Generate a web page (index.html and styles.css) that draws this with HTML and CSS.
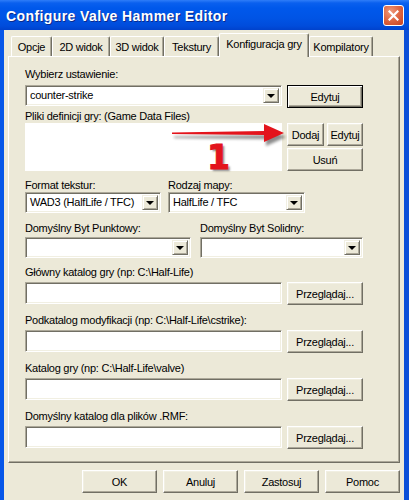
FILE: index.html
```html
<!DOCTYPE html>
<html>
<head>
<meta charset="utf-8">
<link rel="stylesheet" href="styles.css">
</head>
<body>
<div class="window">
  <div class="titlebar">
    <span class="title">Configure Valve Hammer Editor</span>
    <span class="close"><svg width="11" height="11" viewBox="0 0 11 11"><path d="M1.5 1.5 L9.5 9.5 M9.5 1.5 L1.5 9.5" stroke="#fff" stroke-width="2.2" stroke-linecap="square"/></svg></span>
  </div>
  <div class="frame">
    <div class="tabs">
      <div class="tab w-opcje">Opcje</div>
      <div class="tab w-2d">2D widok</div>
      <div class="tab w-3d">3D widok</div>
      <div class="tab w-tex">Tekstury</div>
      <div class="tab active w-konf">Konfiguracja gry</div>
      <div class="tab w-komp">Kompilatory</div>
    </div>
    <div class="panel">
      <div class="label">Wybierz ustawienie:</div>
      <div class="row r1">
        <div class="combo w-main"><span class="val">counter-strike</span><span class="drop"><i></i></span></div>
        <div class="btn default w-btn">Edytuj</div>
      </div>
      <div class="label l2">Pliki definicji gry: (Game Data Files)</div>
      <div class="row">
        <div class="listbox w-main"></div>
        <div class="btngrid">
          <div class="btn">Dodaj</div>
          <div class="btn">Edytuj</div>
          <div class="btn span2">Usuń</div>
        </div>
      </div>
      <div class="pair p1">
        <div class="label">Format tekstur:</div>
        <div class="label">Rodzaj mapy:</div>
        <div class="combo"><span class="val">WAD3 (HalfLife / TFC)</span><span class="drop"><i></i></span></div>
        <div class="combo"><span class="val">HalfLife / TFC</span><span class="drop"><i></i></span></div>
      </div>
      <div class="pair p2">
        <div class="label">Domyślny Byt Punktowy:</div>
        <div class="label">Domyślny Byt Solidny:</div>
        <div class="combo"><span class="val"></span><span class="drop"><i></i></span></div>
        <div class="combo"><span class="val"></span><span class="drop"><i></i></span></div>
      </div>
      <div class="field first">
        <div class="label">Główny katalog gry (np: C:\Half-Life)</div>
        <div class="row"><div class="edit w-main"></div><div class="btn w-btn">Przeglądaj...</div></div>
      </div>
      <div class="field">
        <div class="label">Podkatalog modyfikacji (np: C:\Half-Life\cstrike):</div>
        <div class="row"><div class="edit w-main"></div><div class="btn w-btn">Przeglądaj...</div></div>
      </div>
      <div class="field">
        <div class="label">Katalog gry (np: C:\Half-Life\valve)</div>
        <div class="row"><div class="edit w-main"></div><div class="btn w-btn">Przeglądaj...</div></div>
      </div>
      <div class="field">
        <div class="label">Domyślny katalog dla plików .RMF:</div>
        <div class="row"><div class="edit w-main"></div><div class="btn w-btn">Przeglądaj...</div></div>
      </div>

      <svg class="arrow" width="124" height="30" viewBox="0 0 124 30">
        <defs>
          <filter id="sh" x="-10%" y="-40%" width="130%" height="200%">
            <feGaussianBlur stdDeviation="1.6"/>
          </filter>
        </defs>
        <g transform="translate(2,3)" fill="#000" opacity="0.45" filter="url(#sh)">
          <path d="M0 12.5 L92 11 L92 4 L112 13 L92 22 L92 15 L0 14 Z"/>
        </g>
        <path d="M0 11.5 L92 10 L92 3 L112 12 L92 21 L92 14 L0 13 Z" fill="#E3141C"/>
      </svg>
      <span class="num">1</span>
    </div>
    <div class="footer">
      <div class="btn fbtn">OK</div>
      <div class="btn fbtn">Anuluj</div>
      <div class="btn fbtn">Zastosuj</div>
      <div class="btn fbtn">Pomoc</div>
    </div>
  </div>
</div>
</body>
</html>
```
FILE: styles.css
```css
* { box-sizing: border-box; }
html, body { margin: 0; padding: 0; }
body {
  width: 409px;
  height: 500px;
  overflow: hidden;
  background: #ECE9D8;
  font-family: "Liberation Sans", Arial, sans-serif;
  font-size: 11px;
  letter-spacing: -0.25px;
  color: #000;
}
.window {
  width: 409px;
  height: 500px;
  display: flex;
  flex-direction: column;
}
.titlebar {
  height: 30px;
  flex: none;
  display: flex;
  align-items: center;
  justify-content: space-between;
  padding: 0 5px 0 6px;
  background: linear-gradient(#2F7DF8 0px, #0A60EE 3px, #0058EB 8px, #0054E5 18px, #004CDB 26px, #0042CC 30px);
}
.title {
  color: #fff;
  font-weight: bold;
  font-size: 14px;
  letter-spacing: 0.4px;
  text-shadow: 1px 1px 0 #0B2A8C;
  margin-top: 1px;
}
.close {
  width: 21px;
  height: 21px;
  border: 1px solid #fff;
  border-radius: 3px;
  background: radial-gradient(circle at 35% 30%, #EE9A7C 0%, #E06A46 45%, #C9401E 100%);
  display: flex;
  align-items: center;
  justify-content: center;
  margin-top: 1px;
}
.frame {
  flex: 1;
  display: flex;
  flex-direction: column;
  border-left: 4px solid #0656E8;
  border-right: 5px solid #0A4FD8;
  background: #ECE9D8;
}
/* tabs */
.tabs {
  display: flex;
  align-items: flex-end;
  height: 26px;
  padding-left: 7px;
  position: relative;
  z-index: 2;
}
.tab {
  height: 20px;
  text-align: center;
  line-height: 13px;
  padding-top: 4px;
  border-top: 1px solid #fff;
  border-left: 1px solid #fff;
  border-right: 1px solid #716F64;
  box-shadow: inset -1px 0 0 #ACA899;
  border-top-left-radius: 2px;
  border-top-right-radius: 2px;
  background: #ECE9D8;
  white-space: nowrap;
}
.tab.active {
  height: 24px;
  margin-bottom: -1px;
  padding-top: 4px;
}
.w-opcje { width: 41px; }
.w-2d { width: 58px; }
.w-3d { width: 54px; }
.w-tex { width: 55px; }
.w-konf { width: 90px; }
.w-komp { width: 64px; }
/* panel */
.panel {
  position: relative;
  margin: 0 4px;
  height: 407px;
  flex: none;
  border-top: 1px solid #fff;
  border-left: 1px solid #fff;
  border-right: 1px solid #716F64;
  border-bottom: 1px solid #716F64;
  box-shadow: inset -1px -1px 0 #ACA899;
  padding: 11px 36px 0 16px;
}
.label {
  line-height: 13px;
  height: 13px;
  white-space: nowrap;
}
.row {
  display: flex;
  gap: 5px;
  align-items: flex-start;
}
.r1 { margin-top: 4px; }
.l2 { margin-top: 2px; }
.w-main { width: 257px; }
.w-btn { width: 76px; }
.combo {
  height: 21px;
  background: #fff;
  display: flex;
  align-items: center;
  border: 1px solid;
  border-color: #ACA899 #fff #fff #ACA899;
  box-shadow: inset 1px 1px 0 #716F64, inset -1px -1px 0 #F1EFE2;
  padding: 2px 2px 2px 2px;
}
.combo .val {
  flex: 1;
  padding-left: 2px;
  white-space: nowrap;
  overflow: hidden;
  line-height: 13px;
}
.drop {
  width: 16px;
  height: 15px;
  flex: none;
  background: #ECE9D8;
  border: 1px solid;
  border-color: #F1EFE2 #716F64 #716F64 #F1EFE2;
  box-shadow: inset 1px 1px 0 #fff, inset -1px -1px 0 #ACA899;
  display: flex;
  align-items: center;
  justify-content: center;
}
.drop i {
  display: block;
  width: 0;
  height: 0;
  border-left: 4px solid transparent;
  border-right: 4px solid transparent;
  border-top: 4px solid #000;
  margin-top: 1px;
}
.btn {
  height: 23px;
  display: flex;
  align-items: center;
  justify-content: center;
  background: #ECE9D8;
  border: 1px solid;
  border-color: #fff #716F64 #716F64 #fff;
  box-shadow: inset -1px -1px 0 #ACA899, inset 1px 1px 0 #F1EFE2;
  white-space: nowrap;
}
.btn.default {
  border: 1px solid #000;
  box-shadow: inset 1px 1px 0 #fff, inset -1px -1px 0 #716F64, inset -2px -2px 0 #ACA899;
}
.listbox {
  height: 48px;
  background: #fff;
}
.btngrid {
  width: 76px;
  display: grid;
  grid-template-columns: 37px 36px;
  column-gap: 3px;
  row-gap: 2px;
}
.btngrid .btn { height: 23px; }
.btngrid .span2 { grid-column: 1 / 3; }
.pair {
  display: grid;
  column-gap: 7px;
  row-gap: 0;
}
.p1 {
  grid-template-columns: 136px 137px;
  margin-top: 8px;
}
.p2 {
  grid-template-columns: 166px 163px;
  column-gap: 9px;
  margin-top: 9px;
}
.p2 .label { margin-bottom: 2px; }
.field { margin-top: 9px; }
.field.first { margin-top: 8px; }
.field .label { margin-bottom: 3px; }
.edit {
  height: 22px;
  background: #fff;
  border: 1px solid;
  border-color: #ACA899 #fff #fff #ACA899;
  box-shadow: inset 1px 1px 0 #716F64, inset -1px -1px 0 #F1EFE2;
}
.arrow {
  position: absolute;
  left: 163px;
  top: 64px;
}
.num {
  position: absolute;
  left: 198px;
  top: 84px;
  font-family: "DejaVu Sans", sans-serif;
  font-weight: bold;
  font-size: 33px;
  line-height: 33px;
  letter-spacing: 0;
  color: #E3141C;
  -webkit-text-stroke: 1px #E3141C;
  text-shadow: 2px 2px 2px rgba(0,0,0,0.45);
}
.footer {
  display: flex;
  justify-content: flex-end;
  gap: 6px;
  padding: 7px 4px 0 0;
}
.fbtn { width: 75px; }
```
